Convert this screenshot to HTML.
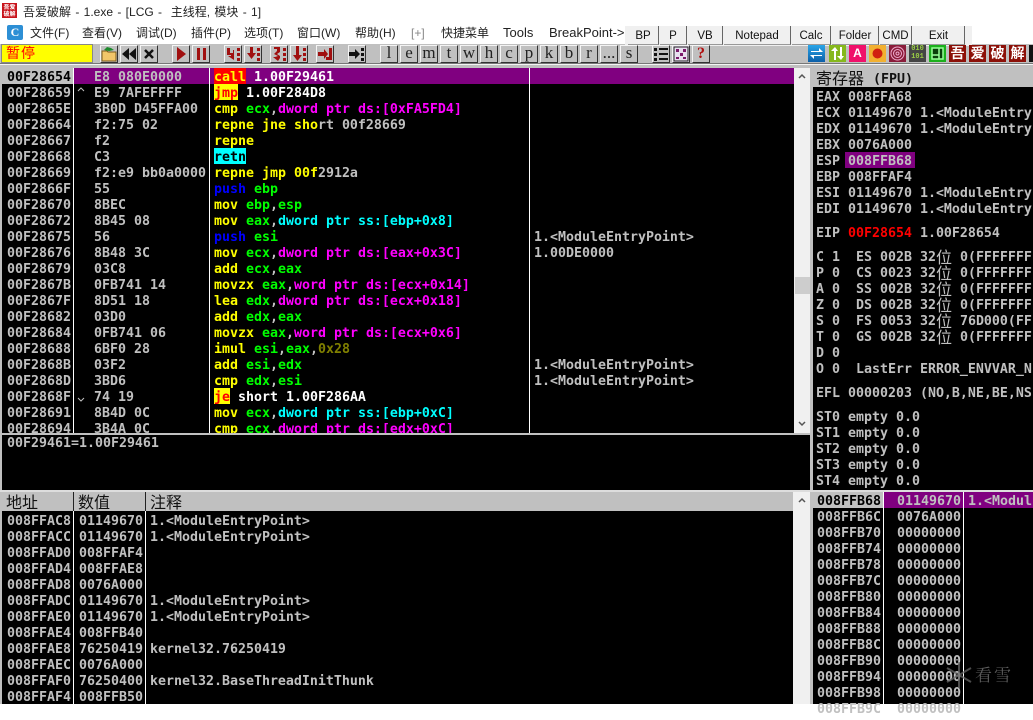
<!DOCTYPE html>
<html><head><meta charset="utf-8"><style>
html,body{margin:0;padding:0;background:#fff;width:1033px;height:704px;overflow:hidden}
div,span.a{position:absolute}
.t{font:12px/18px "Liberation Sans","Noto Sans CJK SC",sans-serif;color:#222;white-space:pre}
.l{font-size:13px}
.p{background:#000;overflow:hidden}
.r{position:absolute;height:16px;font:bold 13.29px/20px "DejaVu Sans Mono","Noto Sans CJK SC",monospace;color:#c0c0c0;white-space:pre}
.y{color:#ff0}.g{color:#0f0}.m{color:#f0f}.c{color:#0ff}.b{color:#00f}.w{color:#fff}.o{color:#808000}
.tb{background:#f0f0f0;border-right:1px solid #666;border-bottom:1px solid #999;top:26px;height:18px;font:11.500px/20px "Liberation Sans",sans-serif;color:#111;text-align:center}
.bt{top:45px;width:16px;height:16px;background:#c0c0c0;border:1px solid;border-color:#f4f4f4 #333 #333 #f4f4f4;text-align:center;font:normal 17px/14px "Liberation Serif",serif;color:#222}
.bt svg{position:absolute;left:0;top:0}
.ic{top:45px;width:17px;height:17px;text-align:center;color:#fff;font:bold 14px/17px "Noto Sans CJK SC",sans-serif;overflow:hidden}
.h{font:16px/19px "Noto Sans CJK SC",sans-serif;color:#111;position:absolute;white-space:pre}
.z{display:inline-block;width:16px;font:16px/16px "WenQuanYi Zen Hei","Noto Sans CJK SC",sans-serif;font-weight:normal;vertical-align:top;text-align:center}
.v{background:#fff;width:1px}
</style></head><body>

<!-- title -->
<div style="left:2px;top:3px;width:15px;height:15px;background:#c8141c"></div>
<div style="left:3px;top:4px;width:13px;height:13px;font:bold 6px/6.500px 'Noto Sans CJK SC',sans-serif;color:#fff;word-break:break-all;text-align:center;overflow:hidden">吾爱破解</div>
<div class="t" style="left:23px;top:3px;word-spacing:1px">吾爱破解 - 1.exe - [LCG -  主线程, 模块 - 1]</div>

<!-- menu -->
<div style="left:7px;top:25px;width:16px;height:15px;background:#2d8fd5;border-radius:2px;color:#fff;font:bold 12px/15px 'Liberation Serif',serif;text-align:center">C</div>
<div class="t" style="left:30px;top:24px">文件(F)</div>
<div class="t" style="left:82px;top:24px">查看(V)</div>
<div class="t" style="left:136px;top:24px">调试(D)</div>
<div class="t" style="left:191px;top:24px">插件(P)</div>
<div class="t" style="left:244px;top:24px">选项(T)</div>
<div class="t" style="left:297px;top:24px">窗口(W)</div>
<div class="t" style="left:355px;top:24px">帮助(H)</div>
<div class="t" style="left:411px;top:24px;color:#888">[+]</div>
<div class="t" style="left:441px;top:24px">快捷菜单</div>
<div class="t l" style="left:503px;top:24px">Tools</div>
<div class="t l" style="left:549px;top:24px">BreakPoint-&gt;</div>

<!-- toolbar bg -->
<div style="left:0;top:44px;width:1033px;height:24px;background:#c0c0c0"></div>
<div style="left:0;top:64px;width:1033px;height:1px;background:#f4f4f4"></div>
<div style="left:0;top:63px;width:1033px;height:1px;background:#777"></div>

<!-- tab buttons -->
<div style="left:625px;top:26px;width:347px;height:20px;background:#f0f0f0"></div>
<div class="tb" style="left:628px;width:30px">BP</div>
<div class="tb" style="left:660px;width:26px">P</div>
<div class="tb" style="left:688px;width:34px">VB</div>
<div class="tb" style="left:724px;width:66px">Notepad</div>
<div class="tb" style="left:792px;width:38px">Calc</div>
<div class="tb" style="left:832px;width:46px">Folder</div>
<div class="tb" style="left:880px;width:31px">CMD</div>
<div class="tb" style="left:913px;width:51px">Exit</div>

<!-- status -->
<div style="left:1px;top:44px;width:92px;height:19px;background:#ff0;border:1px solid #888;box-sizing:border-box;color:#f00;font:14px/17px 'Noto Sans CJK SC',sans-serif;padding-left:4px;letter-spacing:1px">暂停</div>

<!-- tool buttons -->
<div class="bt" style="left:100px"><svg width="16" height="16"><path d="M1 15V5h5l1 1h8v9z" fill="#f2c66a" stroke="#7a5a1a"/><path d="M3 4l3-3 4 1 3 2-5 1z" fill="#1c8a2c"/></svg></div>
<div class="bt" style="left:120px"><svg width="16" height="16"><path d="M8 2v12L1 8zM15 2v12L8 8z" fill="#111"/></svg></div>
<div class="bt" style="left:140px"><svg width="16" height="16"><path d="M4 4l8 8M12 4l-8 8" stroke="#111" stroke-width="2.500"/></svg></div>
<div class="bt" style="left:172px"><svg width="16" height="16"><path d="M4 1v14l9-7z" fill="#a01010"/></svg></div>
<div class="bt" style="left:192px"><svg width="16" height="16"><path d="M4 2h3v12H4zM10 2h3v12h-3z" fill="#a01010"/></svg></div>
<div class="bt" style="left:224px"><svg width="16" height="16"><path d="M2 2h3v5h3V4h1v10l-6-4h3V9H2z" fill="#a01010"/><path d="M12 2h3v3h-3zM12 7h3v3h-3zM12 12h3v3h-3z" fill="#a01010"/></svg></div>
<div class="bt" style="left:244px"><svg width="16" height="16"><path d="M5 1h3v6h3l-4.500 6L2 7h3z" fill="#a01010"/><path d="M12 2h3v3h-3zM12 7h3v3h-3zM12 12h3v3h-3z" fill="#a01010"/></svg></div>
<div class="bt" style="left:270px"><svg width="16" height="16"><path d="M3 1h6v5L6 8l3 2v2l-2 3-5-4h2l3-1-4-2 3-3V3H3z" fill="#a01010"/><path d="M12 2h3v3h-3zM12 7h3v3h-3zM12 12h3v3h-3z" fill="#a01010"/></svg></div>
<div class="bt" style="left:290px"><svg width="16" height="16"><path d="M5 0h3v9h3l-4.500 6L2 9h3z" fill="#a01010"/><path d="M12 2h3v3h-3zM12 7h3v3h-3zM12 12h3v3h-3z" fill="#a01010"/></svg></div>
<div class="bt" style="left:316px"><svg width="16" height="16"><path d="M1 6h6V3l4 5-4 5v-3H1z" fill="#a01010"/><path d="M12 2h3v12H9v-3h3z" fill="#a01010"/></svg></div>
<div class="bt" style="left:348px"><svg width="16" height="16"><path d="M0 6h6V3l5 5-5 5v-3H0z" fill="#111"/><path d="M12 2h3v3h-3zM12 7h3v3h-3zM12 12h3v3h-3z" fill="#111"/></svg></div>
<div class="bt" style="left:380px">l</div><div class="bt" style="left:400px">e</div><div class="bt" style="left:420px">m</div><div class="bt" style="left:440px">t</div><div class="bt" style="left:460px">w</div><div class="bt" style="left:480px">h</div><div class="bt" style="left:500px">c</div><div class="bt" style="left:520px">p</div><div class="bt" style="left:540px">k</div><div class="bt" style="left:560px">b</div><div class="bt" style="left:580px">r</div><div class="bt" style="left:600px">...</div><div class="bt" style="left:620px">s</div>
<div class="bt" style="left:652px"><svg width="16" height="16"><path d="M1 2h3v3H1zM6 2h9v2H6zM1 7h3v3H1zM6 7h9v2H6zM1 12h3v3H1zM6 12h9v2H6z" fill="#111"/></svg></div>
<div class="bt" style="left:672px;background:#e8e0f0"><svg width="16" height="16"><path d="M1 1h14v14H1z" fill="none" stroke="#222"/><path d="M3 3h3v3H3zM10 3h3v3h-3zM7 7h3v3H7zM3 11h3v2H3zM10 11h3v2h-3z" fill="#7a1a6a"/></svg></div>
<div class="bt" style="left:692px;color:#b01010;font:bold 16px/15px 'Liberation Serif',serif">?</div>

<!-- colored icons -->
<div class="ic" style="left:808px;background:linear-gradient(#2aa5e8,#0c5fa8)"><svg width="17" height="17"><path d="M3 6h8V3l4 4H3zM14 11H6v3l-4-4h12z" fill="#fff"/></svg></div>
<div class="ic" style="left:829px;background:#86b81c"><svg width="17" height="17"><path d="M5 15V6H2l4-4 3 4H7v9zM11 2v9H8l4 4 3-4h-2V2z" fill="#fff"/></svg></div>
<div class="ic" style="left:849px;background:#f0106a;font:bold 12px/17px 'Liberation Sans',sans-serif">A</div>
<div class="ic" style="left:869px;background:#f2b030"><svg width="17" height="17"><circle cx="8.500" cy="8.500" r="5" fill="#d02010"/></svg></div>
<div class="ic" style="left:889px;background:#8a1c3a"><svg width="17" height="17"><g fill="none" stroke="#eac"><circle cx="8.500" cy="8.500" r="6.500"/><circle cx="8.500" cy="8.500" r="4"/><circle cx="8.500" cy="8.500" r="1.500"/></g></svg></div>
<div class="ic" style="left:909px;background:#444;color:#9c4;font:bold 7px/8px 'Liberation Mono',monospace;padding-top:0">010<br>101</div>
<div class="ic" style="left:929px;background:#1cb01c"><svg width="17" height="17"><path d="M3 3h11v11H3zM3 10h7M10 3v11" fill="#0a400a" stroke="#9f9" stroke-width="1.500"/></svg></div>
<div class="ic" style="left:949px;background:#8c1008">吾</div>
<div class="ic" style="left:969px;background:#8c1008">爱</div>
<div class="ic" style="left:989px;background:#8c1008">破</div>
<div class="ic" style="left:1009px;background:#8c1008">解</div>
<div style="left:1029px;top:45px;width:4px;height:17px;background:#111"></div>

<!-- structure backgrounds -->
<div style="left:0;top:68px;width:1033px;height:636px;background:#c0c0c0"></div>
<div class="p" style="left:2px;top:68px;width:792px;height:365px"></div>
<div class="p" style="left:2px;top:435px;width:808px;height:55px"></div>
<div style="left:0;top:490px;width:1033px;height:2px;background:#ddd"></div>
<div class="p" style="left:2px;top:511px;width:791px;height:193px"></div>
<div class="p" style="left:813px;top:87px;width:220px;height:403px"></div>
<div class="p" style="left:813px;top:492px;width:220px;height:212px"></div>
<div style="left:794px;top:68px;width:16px;height:365px;background:#f0f0f0"></div>
<div style="left:795px;top:277px;width:15px;height:17px;background:#cdcdcd"></div>
<div style="left:793px;top:492px;width:17px;height:212px;background:#f0f0f0"></div>
<svg style="position:absolute;left:794px;top:68px" width="16" height="16"><path d="M5 10l3-3 3 3" fill="none" stroke="#555" stroke-width="1.500"/></svg>
<svg style="position:absolute;left:794px;top:416px" width="16" height="16"><path d="M5 6l3 3 3-3" fill="none" stroke="#555" stroke-width="1.500"/></svg>
<svg style="position:absolute;left:794px;top:492px" width="16" height="16"><path d="M5 10l3-3 3 3" fill="none" stroke="#555" stroke-width="1.500"/></svg>

<!-- disasm highlight row -->
<div style="left:0;top:68px;width:73px;height:16px;background:#c0c0c0"></div>
<div style="left:74px;top:68px;width:720px;height:16px;background:#800080"></div>
<div style="left:214px;top:68px;width:32px;height:16px;background:#f00"></div>
<div style="left:214px;top:84px;width:24px;height:16px;background:#ff0"></div>
<div style="left:214px;top:148px;width:32px;height:16px;background:#0ff"></div>
<div style="left:214px;top:388px;width:16px;height:16px;background:#ff0"></div>
<div class="v" style="left:73px;top:68px;height:365px"></div>
<div class="v" style="left:209px;top:68px;height:365px"></div>
<div class="v" style="left:529px;top:68px;height:365px"></div>

<!-- address col -->
<div class="r" style="left:7px;top:68px;color:#000">00F28654</div>
<div class="r" style="left:7px;top:84px">00F28659</div>
<div class="r" style="left:7px;top:100px">00F2865E</div>
<div class="r" style="left:7px;top:116px">00F28664</div>
<div class="r" style="left:7px;top:132px">00F28667</div>
<div class="r" style="left:7px;top:148px">00F28668</div>
<div class="r" style="left:7px;top:164px">00F28669</div>
<div class="r" style="left:7px;top:180px">00F2866F</div>
<div class="r" style="left:7px;top:196px">00F28670</div>
<div class="r" style="left:7px;top:212px">00F28672</div>
<div class="r" style="left:7px;top:228px">00F28675</div>
<div class="r" style="left:7px;top:244px">00F28676</div>
<div class="r" style="left:7px;top:260px">00F28679</div>
<div class="r" style="left:7px;top:276px">00F2867B</div>
<div class="r" style="left:7px;top:292px">00F2867F</div>
<div class="r" style="left:7px;top:308px">00F28682</div>
<div class="r" style="left:7px;top:324px">00F28684</div>
<div class="r" style="left:7px;top:340px">00F28688</div>
<div class="r" style="left:7px;top:356px">00F2868B</div>
<div class="r" style="left:7px;top:372px">00F2868D</div>
<div class="r" style="left:7px;top:388px">00F2868F</div>
<div class="r" style="left:7px;top:404px">00F28691</div>
<div class="r" style="left:7px;top:420px;height:13px;overflow:hidden">00F28694</div>

<!-- hex col -->
<div class="r" style="left:94px;top:68px">E8 080E0000</div>
<div class="r" style="left:94px;top:84px">E9 7AFEFFFF</div>
<div class="r" style="left:94px;top:100px">3B0D D45FFA00</div>
<div class="r" style="left:94px;top:116px">f2:75 02</div>
<div class="r" style="left:94px;top:132px">f2</div>
<div class="r" style="left:94px;top:148px">C3</div>
<div class="r" style="left:94px;top:164px">f2:e9 bb0a0000</div>
<div class="r" style="left:94px;top:180px">55</div>
<div class="r" style="left:94px;top:196px">8BEC</div>
<div class="r" style="left:94px;top:212px">8B45 08</div>
<div class="r" style="left:94px;top:228px">56</div>
<div class="r" style="left:94px;top:244px">8B48 3C</div>
<div class="r" style="left:94px;top:260px">03C8</div>
<div class="r" style="left:94px;top:276px">0FB741 14</div>
<div class="r" style="left:94px;top:292px">8D51 18</div>
<div class="r" style="left:94px;top:308px">03D0</div>
<div class="r" style="left:94px;top:324px">0FB741 06</div>
<div class="r" style="left:94px;top:340px">6BF0 28</div>
<div class="r" style="left:94px;top:356px">03F2</div>
<div class="r" style="left:94px;top:372px">3BD6</div>
<div class="r" style="left:94px;top:388px">74 19</div>
<div class="r" style="left:94px;top:404px">8B4D 0C</div>
<div class="r" style="left:94px;top:420px;height:13px;overflow:hidden">3B4A 0C</div>
<svg style="position:absolute;left:76px;top:86px" width="10" height="8"><path d="M2 5l3-3 3 3" fill="none" stroke="#c0c0c0"/></svg>
<svg style="position:absolute;left:76px;top:396px" width="10" height="8"><path d="M2 2l3 3 3-3" fill="none" stroke="#c0c0c0"/></svg>

<!-- disasm col -->
<div class="r y" style="left:214px;top:68px">call<span class="w"> 1.00F29461</span></div>
<div class="r" style="left:214px;top:84px"><span style="color:#f00">jmp</span><span class="w"> 1.00F284D8</span></div>
<div class="r" style="left:214px;top:100px"><span class="y">cmp </span><span class="g">ecx</span>,<span class="m">dword ptr ds:[0xFA5FD4]</span></div>
<div class="r" style="left:214px;top:116px"><span class="y">repne jne sho</span>rt 00f28669</div>
<div class="r y" style="left:214px;top:132px">repne</div>
<div class="r" style="left:214px;top:148px;color:#000">retn</div>
<div class="r" style="left:214px;top:164px"><span class="y">repne jmp 00f</span>2912a</div>
<div class="r" style="left:214px;top:180px"><span class="b">push </span><span class="g">ebp</span></div>
<div class="r" style="left:214px;top:196px"><span class="y">mov </span><span class="g">ebp</span>,<span class="g">esp</span></div>
<div class="r" style="left:214px;top:212px"><span class="y">mov </span><span class="g">eax</span>,<span class="c">dword ptr ss:[ebp+0x8]</span></div>
<div class="r" style="left:214px;top:228px"><span class="b">push </span><span class="g">esi</span></div>
<div class="r" style="left:214px;top:244px"><span class="y">mov </span><span class="g">ecx</span>,<span class="m">dword ptr ds:[eax+0x3C]</span></div>
<div class="r" style="left:214px;top:260px"><span class="y">add </span><span class="g">ecx</span>,<span class="g">eax</span></div>
<div class="r" style="left:214px;top:276px"><span class="y">movzx </span><span class="g">eax</span>,<span class="m">word ptr ds:[ecx+0x14]</span></div>
<div class="r" style="left:214px;top:292px"><span class="y">lea </span><span class="g">edx</span>,<span class="m">dword ptr ds:[ecx+0x18]</span></div>
<div class="r" style="left:214px;top:308px"><span class="y">add </span><span class="g">edx</span>,<span class="g">eax</span></div>
<div class="r" style="left:214px;top:324px"><span class="y">movzx </span><span class="g">eax</span>,<span class="m">word ptr ds:[ecx+0x6]</span></div>
<div class="r" style="left:214px;top:340px"><span class="y">imul </span><span class="g">esi</span>,<span class="g">eax</span>,<span class="o">0x28</span></div>
<div class="r" style="left:214px;top:356px"><span class="y">add </span><span class="g">esi</span>,<span class="g">edx</span></div>
<div class="r" style="left:214px;top:372px"><span class="y">cmp </span><span class="g">edx</span>,<span class="g">esi</span></div>
<div class="r" style="left:214px;top:388px"><span style="color:#f00">je</span><span class="w"> short 1.00F286AA</span></div>
<div class="r" style="left:214px;top:404px"><span class="y">mov </span><span class="g">ecx</span>,<span class="c">dword ptr ss:[ebp+0xC]</span></div>
<div class="r" style="left:214px;top:420px;height:13px;overflow:hidden"><span class="y">cmp </span><span class="g">ecx</span>,<span class="m">dword ptr ds:[edx+0xC]</span></div>

<!-- comments -->
<div class="r" style="left:534px;top:228px">1.&lt;ModuleEntryPoint&gt;</div>
<div class="r" style="left:534px;top:244px">1.00DE0000</div>
<div class="r" style="left:534px;top:356px">1.&lt;ModuleEntryPoint&gt;</div>
<div class="r" style="left:534px;top:372px">1.&lt;ModuleEntryPoint&gt;</div>

<!-- info -->
<div class="r" style="left:7px;top:434px">00F29461=1.00F29461</div>

<!-- registers -->
<div class="h" style="left:816px;top:68px">寄存器</div>
<div class="r" style="left:873px;top:70px;color:#111">(FPU)</div>
<div style="left:845px;top:152px;width:70px;height:16px;background:#800080"></div>
<div class="r" style="left:816px;top:88px">EAX 008FFA68</div>
<div class="r" style="left:816px;top:104px">ECX 01149670 1.&lt;ModuleEntry</div>
<div class="r" style="left:816px;top:120px">EDX 01149670 1.&lt;ModuleEntry</div>
<div class="r" style="left:816px;top:136px">EBX 0076A000</div>
<div class="r" style="left:816px;top:152px">ESP 008FFB68</div>
<div class="r" style="left:816px;top:168px">EBP 008FFAF4</div>
<div class="r" style="left:816px;top:184px">ESI 01149670 1.&lt;ModuleEntry</div>
<div class="r" style="left:816px;top:200px">EDI 01149670 1.&lt;ModuleEntry</div>
<div class="r" style="left:816px;top:224px">EIP <span style="color:#f00">00F28654</span> 1.00F28654</div>
<div class="r" style="left:816px;top:248px">C 1  ES 002B 32<span class="z">位</span> 0(FFFFFFF</div>
<div class="r" style="left:816px;top:264px">P 0  CS 0023 32<span class="z">位</span> 0(FFFFFFF</div>
<div class="r" style="left:816px;top:280px">A 0  SS 002B 32<span class="z">位</span> 0(FFFFFFF</div>
<div class="r" style="left:816px;top:296px">Z 0  DS 002B 32<span class="z">位</span> 0(FFFFFFF</div>
<div class="r" style="left:816px;top:312px">S 0  FS 0053 32<span class="z">位</span> 76D000(FF</div>
<div class="r" style="left:816px;top:328px">T 0  GS 002B 32<span class="z">位</span> 0(FFFFFFF</div>
<div class="r" style="left:816px;top:344px">D 0</div>
<div class="r" style="left:816px;top:360px">O 0  LastErr ERROR_ENVVAR_N</div>
<div class="r" style="left:816px;top:384px">EFL 00000203 (NO,B,NE,BE,NS</div>
<div class="r" style="left:816px;top:408px">ST0 empty 0.0</div>
<div class="r" style="left:816px;top:424px">ST1 empty 0.0</div>
<div class="r" style="left:816px;top:440px">ST2 empty 0.0</div>
<div class="r" style="left:816px;top:456px">ST3 empty 0.0</div>
<div class="r" style="left:816px;top:472px">ST4 empty 0.0</div>

<!-- dump -->
<div class="h" style="left:6px;top:492px">地址</div>
<div class="h" style="left:78px;top:492px">数值</div>
<div class="h" style="left:150px;top:492px">注释</div>
<div style="left:73px;top:492px;width:1px;height:212px;background:#fff"></div>
<div style="left:145px;top:492px;width:1px;height:212px;background:#fff"></div>
<div style="left:73px;top:492px;width:1px;height:19px;background:#222"></div>
<div style="left:145px;top:492px;width:1px;height:19px;background:#222"></div>
<div class="r" style="left:7px;top:512px">008FFAC8</div><div class="r" style="left:79px;top:512px">01149670</div><div class="r" style="left:150px;top:512px">1.&lt;ModuleEntryPoint&gt;</div>
<div class="r" style="left:7px;top:528px">008FFACC</div><div class="r" style="left:79px;top:528px">01149670</div><div class="r" style="left:150px;top:528px">1.&lt;ModuleEntryPoint&gt;</div>
<div class="r" style="left:7px;top:544px">008FFAD0</div><div class="r" style="left:79px;top:544px">008FFAF4</div>
<div class="r" style="left:7px;top:560px">008FFAD4</div><div class="r" style="left:79px;top:560px">008FFAE8</div>
<div class="r" style="left:7px;top:576px">008FFAD8</div><div class="r" style="left:79px;top:576px">0076A000</div>
<div class="r" style="left:7px;top:592px">008FFADC</div><div class="r" style="left:79px;top:592px">01149670</div><div class="r" style="left:150px;top:592px">1.&lt;ModuleEntryPoint&gt;</div>
<div class="r" style="left:7px;top:608px">008FFAE0</div><div class="r" style="left:79px;top:608px">01149670</div><div class="r" style="left:150px;top:608px">1.&lt;ModuleEntryPoint&gt;</div>
<div class="r" style="left:7px;top:624px">008FFAE4</div><div class="r" style="left:79px;top:624px">008FFB40</div>
<div class="r" style="left:7px;top:640px">008FFAE8</div><div class="r" style="left:79px;top:640px">76250419</div><div class="r" style="left:150px;top:640px">kernel32.76250419</div>
<div class="r" style="left:7px;top:656px">008FFAEC</div><div class="r" style="left:79px;top:656px">0076A000</div>
<div class="r" style="left:7px;top:672px">008FFAF0</div><div class="r" style="left:79px;top:672px">76250400</div><div class="r" style="left:150px;top:672px">kernel32.BaseThreadInitThunk</div>
<div class="r" style="left:7px;top:688px">008FFAF4</div><div class="r" style="left:79px;top:688px">008FFB50</div>

<!-- stack -->
<div style="left:813px;top:492px;width:70px;height:16px;background:#c0c0c0"></div>
<div style="left:884px;top:492px;width:149px;height:16px;background:#800080"></div>
<div class="v" style="left:883px;top:492px;height:212px"></div>
<div class="v" style="left:963px;top:492px;height:212px"></div>
<div class="r" style="left:817px;top:492px;color:#000">008FFB68</div><div class="r" style="left:897px;top:492px">01149670</div><div class="r" style="left:968px;top:492px">1.&lt;Modul</div>
<div class="r" style="left:817px;top:508px">008FFB6C</div><div class="r" style="left:897px;top:508px">0076A000</div>
<div class="r" style="left:817px;top:524px">008FFB70</div><div class="r" style="left:897px;top:524px">00000000</div>
<div class="r" style="left:817px;top:540px">008FFB74</div><div class="r" style="left:897px;top:540px">00000000</div>
<div class="r" style="left:817px;top:556px">008FFB78</div><div class="r" style="left:897px;top:556px">00000000</div>
<div class="r" style="left:817px;top:572px">008FFB7C</div><div class="r" style="left:897px;top:572px">00000000</div>
<div class="r" style="left:817px;top:588px">008FFB80</div><div class="r" style="left:897px;top:588px">00000000</div>
<div class="r" style="left:817px;top:604px">008FFB84</div><div class="r" style="left:897px;top:604px">00000000</div>
<div class="r" style="left:817px;top:620px">008FFB88</div><div class="r" style="left:897px;top:620px">00000000</div>
<div class="r" style="left:817px;top:636px">008FFB8C</div><div class="r" style="left:897px;top:636px">00000000</div>
<div class="r" style="left:817px;top:652px">008FFB90</div><div class="r" style="left:897px;top:652px">00000000</div>
<div class="r" style="left:817px;top:668px">008FFB94</div><div class="r" style="left:897px;top:668px">00000000</div>
<div class="r" style="left:817px;top:684px">008FFB98</div><div class="r" style="left:897px;top:684px">00000000</div>
<div class="r" style="left:817px;top:700px">008FFB9C</div><div class="r" style="left:897px;top:700px">00000000</div>

<!-- watermark -->
<svg style="position:absolute;left:945px;top:661px" width="28" height="28"><g stroke="#666" stroke-width="2" opacity=".75"><path d="M14 1v26M2 7l24 14M26 7L2 21"/></g></svg>
<div style="left:975px;top:662px;font:17px/24px 'Noto Serif CJK SC',serif;color:#5c5c5c;letter-spacing:2px">看雪</div>

</body></html>
